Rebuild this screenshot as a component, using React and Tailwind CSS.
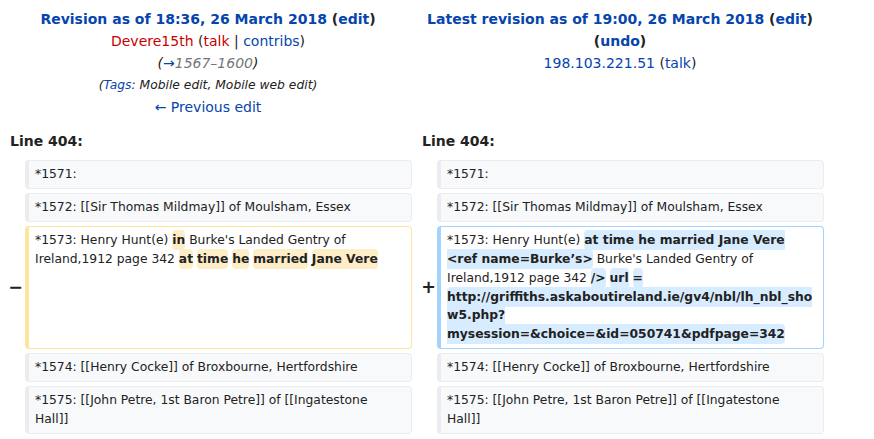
import React from 'react';

const link = 'text-[#0645ad]';
const red = 'text-[#c80000]';

function Del({ children }) {
  return <span className="font-bold bg-[#feeec8] rounded-[4px] py-[3px]">{children}</span>;
}

function Ins({ children }) {
  return <span className="font-bold bg-[#d8ecff] rounded-[4px] py-[3px]">{children}</span>;
}

const context = 'align-top bg-[#f8f9fa] border border-[#eaecf0] border-l-4 rounded-[4px] px-[6px] py-[4px] text-[12.32px] leading-[18.9px] whitespace-pre-wrap break-words';
const marker = 'align-middle text-right font-bold text-[17.5px] leading-[1.2]';

function ContextRow({ text }) {
  return (
    <tr>
      <td></td>
      <td className={context}>{text}</td>
      <td></td>
      <td className={context}>{text}</td>
    </tr>
  );
}

export default function App() {
  return (
    <div className="bg-white w-[874px] h-[439px] overflow-hidden text-[#222] font-['DejaVu_Sans',sans-serif]">
      <table className="w-[828px] table-fixed border-separate border-spacing-[4px]">
        <colgroup>
          <col className="w-[17px]" />
          <col className="w-[387px]" />
          <col className="w-[17px]" />
          <col className="w-[387px]" />
        </colgroup>
        <tbody>
          {/* Revision headers */}
          <tr className="text-[14px] leading-[22px]">
            <td colSpan={2} className="align-top text-center pt-1 pb-1">
              <div className="font-bold">
                <span className={link}>Revision as of 18:36, 26 March 2018</span> (<span className={link}>edit</span>)
              </div>
              <div>
                <span className={red}>Devere15th</span> (<span className={red}>talk</span> | <span className={link}>contribs</span>)
              </div>
              <div className="italic">
                (<span className={link}>→</span><span className="text-[#72777d]">1567–1600</span>)
              </div>
              <div className="italic text-[12.3px]">
                (<span className={link}>Tags</span>: Mobile edit, Mobile web edit)
              </div>
              <div className={link}>← Previous edit</div>
            </td>
            <td colSpan={2} className="align-top text-center pt-1 pb-1">
              <div className="font-bold">
                <span className={link}>Latest revision as of 19:00, 26 March 2018</span> (<span className={link}>edit</span>)
              </div>
              <div className="font-bold">
                (<span className={link}>undo</span>)
              </div>
              <div>
                <span className={link}>198.103.221.51</span> (<span className={link}>talk</span>)
              </div>
            </td>
          </tr>

          {/* Line numbers */}
          <tr className="text-[14px] leading-[22px] font-bold">
            <td colSpan={2} className="pl-[6px] pt-1 pb-1">Line 404:</td>
            <td colSpan={2} className="pl-[6px] pt-1 pb-1">Line 404:</td>
          </tr>

          <ContextRow text="*1571:" />
          <ContextRow text="*1572: [[Sir Thomas Mildmay]] of Moulsham, Essex" />

          {/* Changed line */}
          <tr>
            <td className={marker}><span className="-mr-[2px]">−</span></td>
            <td className="align-top bg-white border border-[#ffe49c] border-l-4 rounded-[4px] px-[6px] py-[4px] text-[12.32px] leading-[18.9px] break-words">
              *1573: Henry Hunt(e) <Del>in</Del> Burke's Landed Gentry of Ireland,1912 page 342 <Del>at</Del> <Del>time</Del>{' '}
              <Del>he</Del> <Del>married</Del> <Del>Jane Vere</Del>
            </td>
            <td className={marker}><span className="-mr-[3px]">+</span></td>
            <td className="align-top bg-white border border-[#a3d3ff] border-l-4 rounded-[4px] px-[6px] py-[4px] text-[12.32px] leading-[18.9px] break-words">
              *1573: Henry Hunt(e) <Ins>at time he married Jane Vere &lt;ref name=Burke’s&gt;</Ins> Burke's Landed Gentry of
              Ireland,1912 page 342 <Ins>/&gt;</Ins> <Ins>url</Ins> <Ins>=</Ins>{' '}
              <Ins>
                http://griffiths.askaboutireland.ie/gv4/nbl/lh_nbl_show5.php?<wbr />mysession=&amp;choice=&amp;id=050741&amp;pdfpage=342
              </Ins>
            </td>
          </tr>

          <ContextRow text="*1574: [[Henry Cocke]] of Broxbourne, Hertfordshire" />
          <ContextRow text={'*1575: [[John Petre, 1st Baron Petre]] of [[Ingatestone\nHall]]'} />
        </tbody>
      </table>
    </div>
  );
}
